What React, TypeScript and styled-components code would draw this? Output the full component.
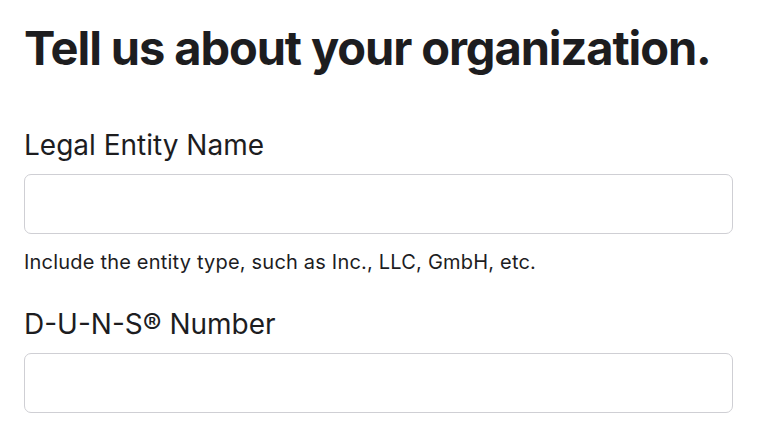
import React from 'react';
import styled, {createGlobalStyle} from 'styled-components';

const GlobalStyle = createGlobalStyle`
  html, body {
    margin: 0;
    padding: 0;
    background: #ffffff;
  }
  body {
    font-family: Inter, "Liberation Sans", sans-serif;
    color: #1d1d1f;
  }
`

type FieldProps = {
    label: string
    hint?: string
}

const Field = ({label, hint}: FieldProps) => {
    return (
        <FieldWrapper>
            <Label>{label}</Label>
            <Input type='text'/>
            {hint && <Hint>{hint}</Hint>}
        </FieldWrapper>
    )
}

function App() {
    return (
        <Page>
            <GlobalStyle/>
            <Title>Tell us about your organization.</Title>
            <Field label='Legal Entity Name' hint='Include the entity type, such as Inc., LLC, GmbH, etc.'/>
            <Field label='D-U-N-S® Number'/>
        </Page>
    );
}

export default App;

const Page = styled.div`
  padding: 20px 35px 0 24px;
  display: flex;
  flex-direction: column;
`

const Title = styled.h1`
  margin: 0 0 52px;
  font-size: 47px;
  font-weight: 700;
  line-height: 56px;
  letter-spacing: -1.1px;
  white-space: nowrap;
`

const FieldWrapper = styled.div`
  display: flex;
  flex-direction: column;
  margin-bottom: 33px;
`

const Label = styled.label`
  font-size: 28px;
  font-weight: 400;
  line-height: 34px;
  margin-bottom: 12px;
`

const Input = styled.input`
  box-sizing: border-box;
  width: 100%;
  height: 60px;
  border: 1.5px solid #cfcfd4;
  border-radius: 7px;
  background: #ffffff;
  outline: none;
  font-size: 20px;
`

const Hint = styled.div`
  margin-top: 16px;
  font-size: 20px;
  line-height: 24px;
  letter-spacing: 0.2px;
`
